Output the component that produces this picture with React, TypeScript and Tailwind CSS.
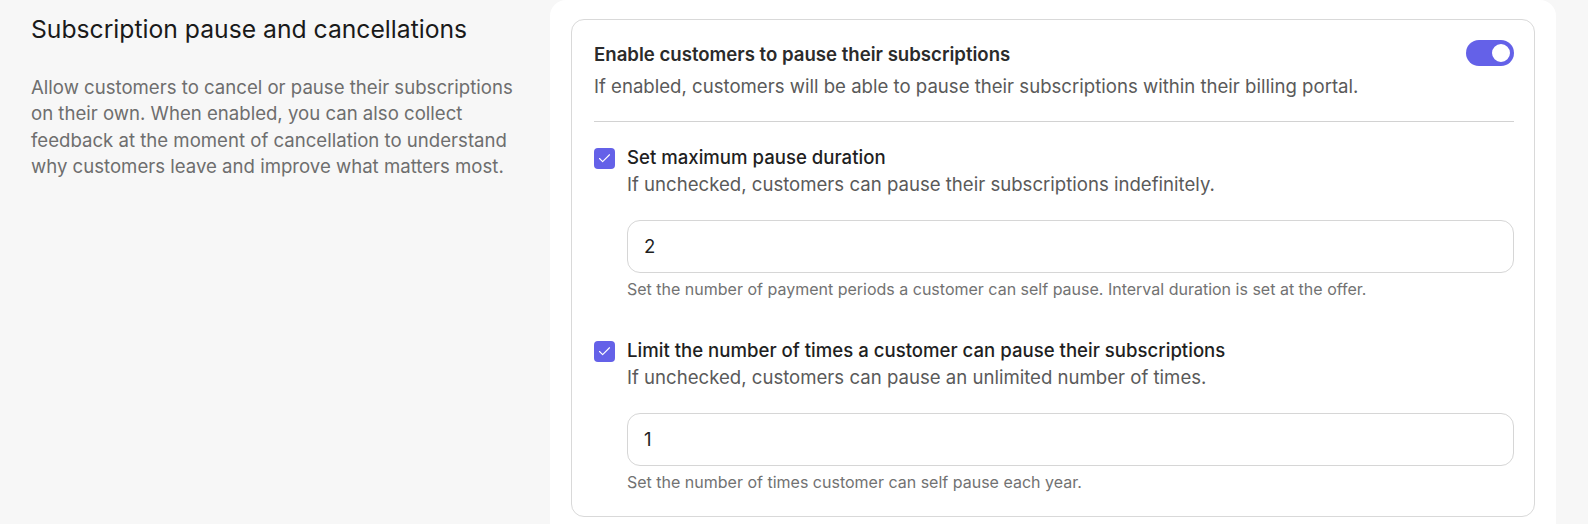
import { Check } from "lucide-react";

function Toggle() {
  return (
    <div className="flex h-[26px] w-[48px] shrink-0 items-center justify-end rounded-full bg-[#6461e8] px-[2px]">
      <div className="h-[22px] w-[22px] rounded-full border-[2px] border-[#6461e8] bg-white" />
    </div>
  );
}

function Checkbox() {
  return (
    <div className="mt-[4px] flex h-[21px] w-[21px] shrink-0 items-center justify-center rounded-[4px] bg-[#6461e8]">
      <Check className="h-[15px] w-[15px] text-white" strokeWidth={1.75} />
    </div>
  );
}

function PauseOption({ label, hint, value, help }: { label: string; hint: string; value: string; help: string }) {
  return (
    <div className="flex gap-[12px]">
      <Checkbox />
      <div className="flex-1">
        <p className="text-[18.6px] font-medium leading-[27px] text-[#1f1f1f]">{label}</p>
        <p className="text-[18.6px] leading-[27px] text-[#5a5a5a]">{hint}</p>
        <div className="mt-[22px] flex h-[53px] items-center rounded-[13px] border border-[#d6d6d6] px-[16px] text-[18.6px] text-[#1f1f1f]">
          {value}
        </div>
        <p className="mt-[6px] text-[16px] leading-[20px] text-[#727272]">{help}</p>
      </div>
    </div>
  );
}

export default function App() {
  return (
    <div className="flex h-[524px] w-[1588px] overflow-hidden bg-[#f7f7f7] font-['Inter',sans-serif]">
      <div className="w-[550px] shrink-0 pl-[31px]">
        <h2 className="mt-[15px] text-[24.7px] leading-[28px] text-[#1a1a1a]">Subscription pause and cancellations</h2>
        <p className="mt-[31px] w-[485px] text-[18.6px] leading-[26.3px] text-[#6e6e6e]">
          Allow customers to cancel or pause their subscriptions on their own. When enabled, you can also collect
          feedback at the moment of cancellation to understand why customers leave and improve what matters most.
        </p>
      </div>

      <div className="w-[1006px] shrink-0 rounded-t-[16px] bg-white px-[21px] pt-[19px]">
        <div className="rounded-[13px] border border-[#d9d9d9] pb-[24px] pl-[22px] pr-[20px] pt-[22px]">
          <div className="flex items-start justify-between">
            <div>
              <p className="text-[18.6px] font-semibold leading-[24px] text-[#2b2b2b]">
                Enable customers to pause their subscriptions
              </p>
              <p className="mt-[8px] text-[18.6px] leading-[24px] text-[#5a5a5a]">
                If enabled, customers will be able to pause their subscriptions within their billing portal.
              </p>
            </div>
            <div className="-mt-[2px]">
              <Toggle />
            </div>
          </div>

          <div className="mt-[23px] h-px bg-[#d2d2d2]" />

          <div className="mt-[22px]">
            <PauseOption
              label="Set maximum pause duration"
              hint="If unchecked, customers can pause their subscriptions indefinitely."
              value="2"
              help="Set the number of payment periods a customer can self pause. Interval duration is set at the offer."
            />
          </div>

          <div className="mt-[38px]">
            <PauseOption
              label="Limit the number of times a customer can pause their subscriptions"
              hint="If unchecked, customers can pause an unlimited number of times."
              value="1"
              help="Set the number of times customer can self pause each year."
            />
          </div>
        </div>
      </div>
    </div>
  );
}
